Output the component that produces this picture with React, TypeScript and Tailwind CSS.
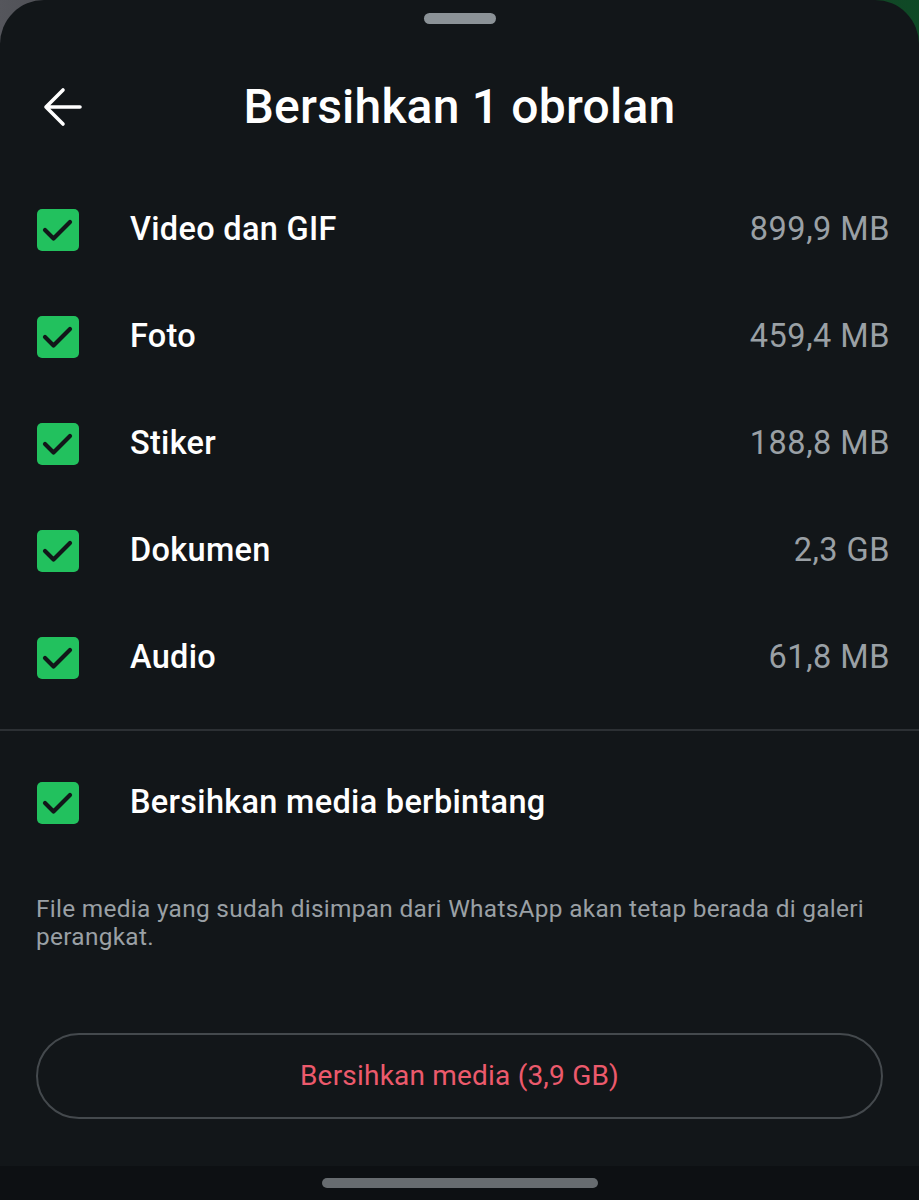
import React from 'react';

const items = [
  { label: 'Video dan GIF', size: '899,9 MB' },
  { label: 'Foto', size: '459,4 MB' },
  { label: 'Stiker', size: '188,8 MB' },
  { label: 'Dokumen', size: '2,3 GB' },
  { label: 'Audio', size: '61,8 MB' },
];

function Check() {
  return (
    <div className="w-[42px] h-[42px] rounded-[5px] bg-[#22c15e] flex items-center justify-center shrink-0">
      <svg width="42" height="42" viewBox="0 0 42 42" fill="none">
        <path d="M8 21 L16.5 29.5 L33 13" stroke="#121619" strokeWidth="4.2" strokeLinecap="round" strokeLinejoin="round" />
      </svg>
    </div>
  );
}

export default function App() {
  return (
    <div
      className="w-[919px] h-[1200px] bg-gradient-to-r from-[#55565c] via-[#1a1d20] to-[#0e4a26] overflow-hidden"
      style={{ fontFamily: 'Roboto, "Noto Sans", sans-serif' }}
    >
      <div className="h-full flex flex-col bg-[#121619] rounded-t-[44px]">
        {/* handle */}
        <div className="flex justify-center pt-[13px]">
          <div className="w-[72px] h-[11px] rounded-full bg-[#8b9297]" />
        </div>

        {/* header */}
        <div className="h-[152px] pt-[14px]">
          <div className="relative h-full flex items-center justify-center">
            <svg className="absolute left-[38px] top-1/2 -translate-y-1/2" width="50" height="50" viewBox="0 0 50 50" fill="none">
              <path d="M25 8 L8 25 L25 42 M8 25 H42" stroke="#ffffff" strokeWidth="3.6" strokeLinecap="round" strokeLinejoin="round" />
            </svg>
            <h1 className="text-white text-[48px] font-medium tracking-[0.2px] leading-none">Bersihkan 1 obrolan</h1>
          </div>
        </div>

        {/* list */}
        <div className="flex flex-col">
          {items.map((it) => (
            <div key={it.label} className="h-[107px] flex items-center pl-[37px] pr-[29px]">
              <Check />
              <span className="ml-[51px] text-white text-[32.5px] font-medium tracking-[0.3px]">{it.label}</span>
              <span className="ml-auto text-[#9aa0a5] text-[32.5px] tracking-[0.5px]">{it.size}</span>
            </div>
          ))}
        </div>

        <div className="h-[2px] bg-[#2c3034] mt-[18px]" />

        <div className="h-[107px] flex items-center pl-[37px] mt-[18px]">
          <Check />
          <span className="ml-[51px] text-white text-[32.5px] font-medium tracking-[0.3px]">Bersihkan media berbintang</span>
        </div>

        <p className="mt-[39px] px-[36px] text-[24.4px] leading-[28px] text-[#9aa0a5] tracking-[0.3px]">
          File media yang sudah disimpan dari WhatsApp akan tetap berada di galeri perangkat.
        </p>

        <div className="mt-[82px] px-[36px]">
          <button className="w-full h-[86px] rounded-full border-2 border-[#44494d] flex items-center justify-center text-[#ec5a6c] text-[28px] tracking-[0.2px]">
            Bersihkan media (3,9 GB)
          </button>
        </div>

        <div className="flex-1" />

        {/* nav bar */}
        <div className="h-[34px] bg-[#0d1013] flex justify-center pt-[12px]">
          <div className="w-[276px] h-[10px] rounded-full bg-[#676c70]" />
        </div>
      </div>
    </div>
  );
}
